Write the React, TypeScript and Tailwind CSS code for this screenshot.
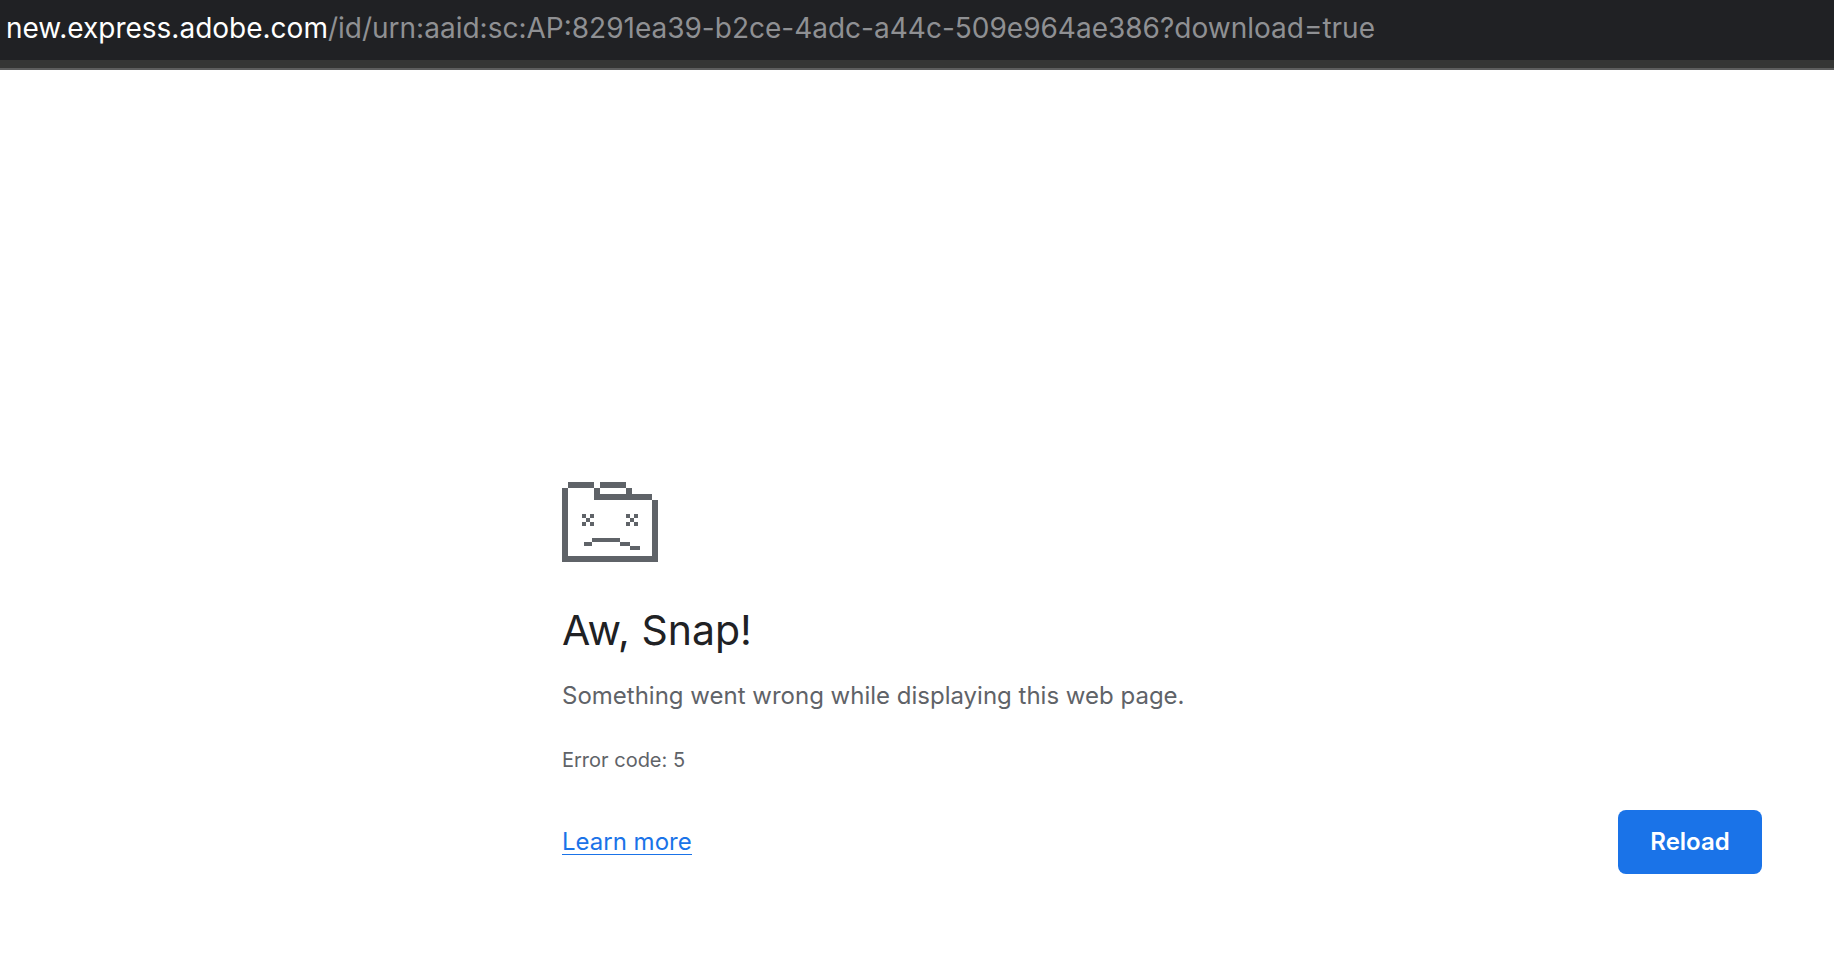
import React from 'react'

function SadFolder() {
  return (
    <svg width="96" height="80" viewBox="0 0 96 80" fill="#5f6368" shapeRendering="crispEdges" aria-hidden="true">
      {/* folder outline, 6px blocks */}
      <path d="M6 0h26v6H6zM38 0h26v6H38zM32 6h6v6h-6zM64 6h6v6h-6zM32 12h58v6H32zM0 6h6v74H0zM90 18h6v62h-6zM6 74h84v6H6z" />
      {/* eyes */}
      <path d="M20 32h4v4h-4zM28 32h4v4h-4zM24 36h4v4h-4zM20 40h4v4h-4zM28 40h4v4h-4z" />
      <path d="M64 32h4v4h-4zM72 32h4v4h-4zM68 36h4v4h-4zM64 40h4v4h-4zM72 40h4v4h-4z" />
      {/* mouth */}
      <path d="M22 60h8v4h-8zM30 56h28v4H30zM58 60h10v4H58zM68 64h10v4H68z" />
    </svg>
  )
}

export default function App() {
  const host = 'new.express.adobe.com'
  const path = '/id/urn:aaid:sc:AP:8291ea39-b2ce-4adc-a44c-509e964ae386?download=true'

  return (
    <div className="min-h-screen bg-white font-['Inter','Liberation_Sans',sans-serif]">
      <header className="border-b-2 border-[#5d5e5e] bg-[#202124]">
        <p className="overflow-hidden whitespace-nowrap px-1.5 pt-2 pb-3 text-[28px] leading-10 text-[#8f9093]">
          <span className="text-white">{host}</span>
          {path}
        </p>
        <div className="h-2 bg-[#353635]" />
      </header>

      <main className="pt-[412px] pr-18 pb-20 pl-[562px]">
        <SadFolder />
        <h1 className="mt-10 text-[41px] leading-14 text-[#202124]">Aw, Snap!</h1>
        <p className="mt-5 text-2xl leading-9 text-[#5f6368]">
          Something went wrong while displaying this web page.
        </p>
        <p className="mt-7 text-xl leading-9 text-[#5f6368]">Error code: 5</p>
        <div className="mt-8 flex items-center justify-between">
          <a href="#learn-more" className="border-b border-[#1a73e8] text-2xl leading-6 text-[#1a73e8]">
            Learn more
          </a>
          <button type="button" className="h-16 min-w-36 rounded-lg bg-[#1a73e8] px-8 text-2xl font-semibold text-white">
            Reload
          </button>
        </div>
      </main>
    </div>
  )
}
